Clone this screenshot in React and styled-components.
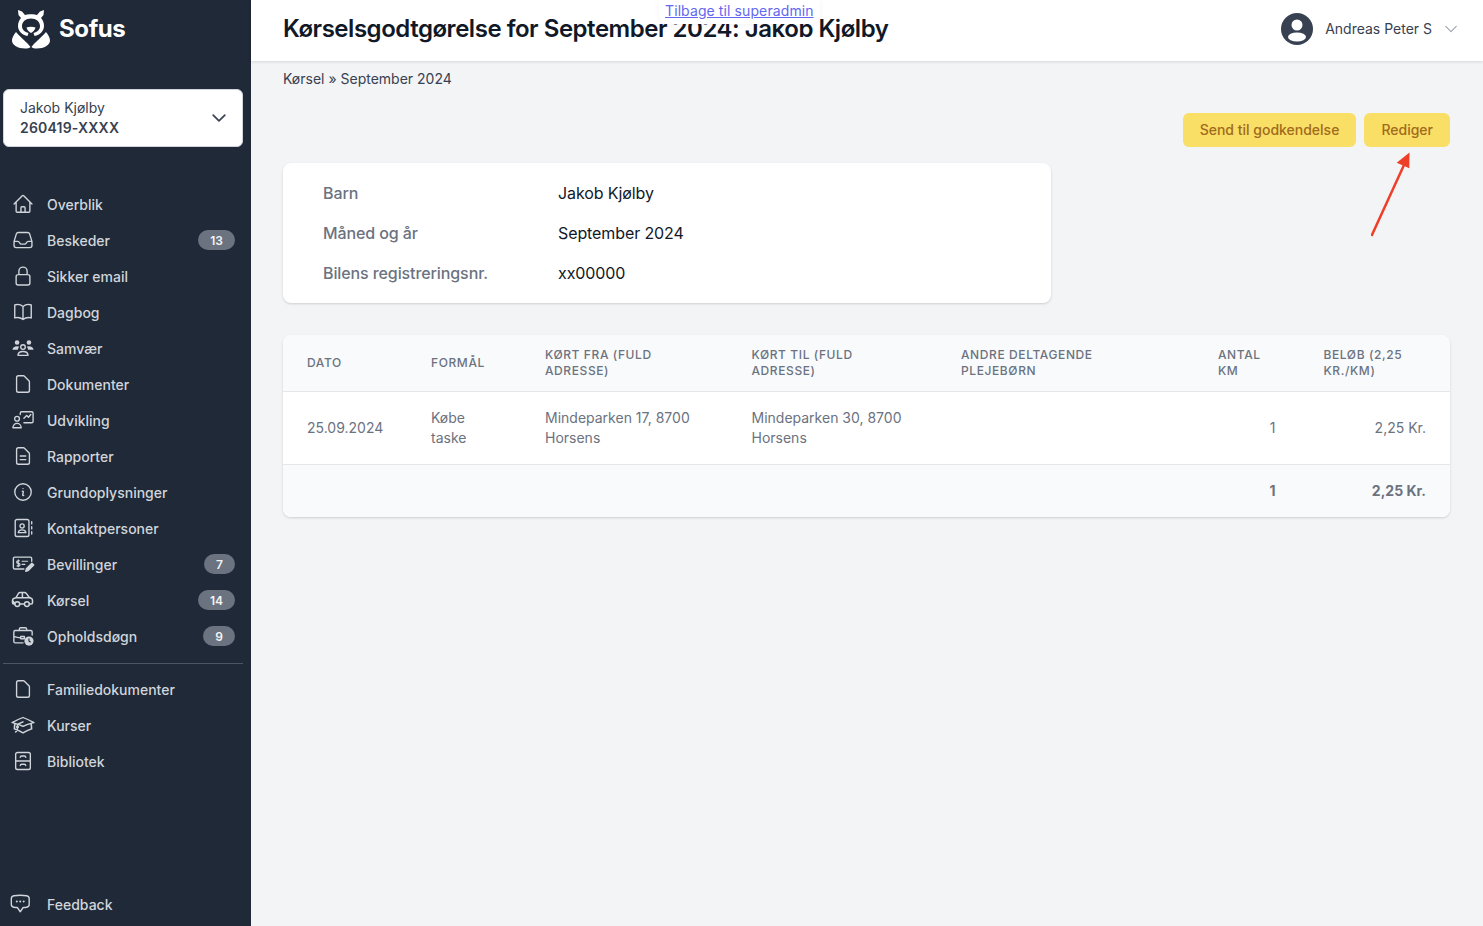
import React from "react";
import styled, { createGlobalStyle } from "styled-components";

const GlobalStyle = createGlobalStyle`
  * { box-sizing: border-box; }
  html, body { margin: 0; height: 100%; overflow: hidden; }
  body {
    font-family: Inter, "Noto Sans", sans-serif;
    background: #f3f4f6;
    color: #111827;
  }
`;

const icons = {
  home: "m2.25 12 8.954-8.955c.44-.439 1.152-.439 1.591 0L21.75 12M4.5 9.75v10.125c0 .621.504 1.125 1.125 1.125H9.75v-4.875c0-.621.504-1.125 1.125-1.125h2.25c.621 0 1.125.504 1.125 1.125V21h4.125c.621 0 1.125-.504 1.125-1.125V9.75M8.25 21h8.25",
  inbox: "M2.25 13.5h3.86a2.25 2.25 0 0 1 2.012 1.244l.256.512a2.25 2.25 0 0 0 2.013 1.244h3.218a2.25 2.25 0 0 0 2.013-1.244l.256-.512a2.25 2.25 0 0 1 2.013-1.244h3.859m-19.5.338V18a2.25 2.25 0 0 0 2.25 2.25h15A2.25 2.25 0 0 0 21.75 18v-4.162c0-.224-.034-.447-.1-.661L19.24 5.338a2.25 2.25 0 0 0-2.15-1.588H6.911a2.25 2.25 0 0 0-2.15 1.588L2.35 13.177a2.25 2.25 0 0 0-.1.661Z",
  lock: "M16.5 10.5V6.75a4.5 4.5 0 1 0-9 0v3.75m-.75 11.25h10.5a2.25 2.25 0 0 0 2.25-2.25v-6.75a2.25 2.25 0 0 0-2.25-2.25H6.75a2.25 2.25 0 0 0-2.25 2.25v6.75a2.25 2.25 0 0 0 2.25 2.25Z",
  book: "M12 6.042A8.967 8.967 0 0 0 6 3.75c-1.052 0-2.062.18-3 .512v14.25A8.987 8.987 0 0 1 6 18c2.305 0 4.408.867 6 2.292m0-14.25a8.966 8.966 0 0 1 6-2.292c1.052 0 2.062.18 3 .512v14.25A8.987 8.987 0 0 0 18 18a8.967 8.967 0 0 0-6 2.292m0-14.25v14.25",
  doc: "M7 21h10a2 2 0 0 0 2-2V9.414a1 1 0 0 0-.293-.707l-5.414-5.414A1 1 0 0 0 12.586 3H7a2 2 0 0 0-2 2v14a2 2 0 0 0 2 2z",
  report: "M9 12h6m-6 4h6m2 5H7a2 2 0 0 1-2-2V5a2 2 0 0 1 2-2h5.586a1 1 0 0 1 .707.293l5.414 5.414a1 1 0 0 1 .293.707V19a2 2 0 0 1-2 2z",
  info: "m11.25 11.25.041-.02a.75.75 0 0 1 1.063.852l-.708 2.836a.75.75 0 0 0 1.063.853l.041-.021M21 12a9 9 0 1 1-18 0 9 9 0 0 1 18 0Zm-9-3.75h.008v.008H12V8.25Z",
  cap: "M4.26 10.147a60.438 60.438 0 0 0-.491 6.347A48.62 48.62 0 0 1 12 20.904a48.62 48.62 0 0 1 8.232-4.41 60.46 60.46 0 0 0-.491-6.347m-15.482 0a50.636 50.636 0 0 0-2.658-.813A59.906 59.906 0 0 1 12 3.493a59.903 59.903 0 0 1 10.399 5.84c-.896.248-1.783.52-2.658.814m-15.482 0A50.717 50.717 0 0 1 12 13.489a50.702 50.702 0 0 1 7.74-3.342M6.75 15a.75.75 0 1 0 0-1.5.75.75 0 0 0 0 1.5Zm0 0v-3.675A55.378 55.378 0 0 1 12 8.443m-7.007 11.55A5.981 5.981 0 0 0 6.75 15.75v-1.5",
  chat: "M8.625 9.75a.375.375 0 1 1-.75 0 .375.375 0 0 1 .75 0Zm0 0H8.25m4.125 0a.375.375 0 1 1-.75 0 .375.375 0 0 1 .75 0Zm0 0H12m4.125 0a.375.375 0 1 1-.75 0 .375.375 0 0 1 .75 0Zm0 0h-.375m-13.5 3.01c0 1.6 1.123 2.994 2.707 3.227 1.129.166 2.27.293 3.423.379.35.026.67.21.865.501L12 21l2.755-4.133a1.14 1.14 0 0 1 .865-.501 48.172 48.172 0 0 0 3.423-.379c1.584-.233 2.707-1.626 2.707-3.228V6.741c0-1.602-1.123-2.995-2.707-3.228A48.394 48.394 0 0 0 12 3c-2.392 0-4.744.175-7.043.513C3.373 3.746 2.25 5.14 2.25 6.741v6.018Z",
  contact: "M5.5 2.75h11a2 2 0 0 1 2 2v14.5a2 2 0 0 1-2 2h-11a2 2 0 0 1-2-2V4.75a2 2 0 0 1 2-2ZM21.5 5v2.5M21.5 10.5v2.5M21.5 16v2.5M11 7.5a2.3 2.3 0 1 0 0 4.6 2.3 2.3 0 0 0 0-4.6ZM6.8 17c.3-2 2-3 4.2-3s3.9 1 4.2 3Z",
  cabinet: "M6 2.75h12a2 2 0 0 1 2 2v14.5a2 2 0 0 1-2 2H6a2 2 0 0 1-2-2V4.75a2 2 0 0 1 2-2ZM4 12h16M9 8c0-1 .6-1.5 1.5-1.5h3c.9 0 1.5.5 1.5 1.5M9 17c0-1 .6-1.5 1.5-1.5h3c.9 0 1.5.5 1.5 1.5",
  car: "M2.5 13.5c0-1.2.7-2 1.8-2.3L6 10.7l2.4-4.2c.4-.6 1-1 1.8-1h4.2c.8 0 1.4.3 1.9.9l3.2 4.3 1.6.6c.9.3 1.4 1 1.4 2v2.4c0 .7-.5 1.2-1.2 1.2h-1.5M5 16.9H3.7c-.7 0-1.2-.5-1.2-1.2v-2.2ZM9.5 16.9h5M6 10.7h14.5M12.4 5.6v5.1M7.3 19.5a2.4 2.4 0 1 0 0-4.8 2.4 2.4 0 0 0 0 4.8ZM16.9 19.5a2.4 2.4 0 1 0 0-4.8 2.4 2.4 0 0 0 0 4.8Z",
  chart: "M9 6V4.5A1.5 1.5 0 0 1 10.5 3h11A1.5 1.5 0 0 1 23 4.5v9a1.5 1.5 0 0 1-1.5 1.5H13M13 10l3-3 2 2 2.5-3M5.5 8a2.6 2.6 0 1 0 0 5.2 2.6 2.6 0 0 0 0-5.2ZM1 20.5c0-2.8 2-4.8 4.5-4.8s4.5 2 4.5 4.8Z",
};

// some icons sit off-centre or wider than the usual 22px box in the picture
const viewBoxes = {
  car: "2 2 22 22",
  cap: "1.5 -0.5 21 25",
  chat: "3 0.5 24 24",
};

const Svg = ({ children, size = 22, box = "0 0 24 24", stretch }) => (
  <svg
    width={size}
    height={size}
    viewBox={box}
    preserveAspectRatio={stretch ? "none" : undefined}
    fill="none"
    stroke="currentColor"
    strokeWidth="1.5"
    strokeLinecap="round"
    strokeLinejoin="round"
  >
    {children}
  </svg>
);

const PeopleIcon = () => (
  <Svg>
    <g fill="currentColor" stroke="none">
      <circle cx="5.5" cy="6" r="2.5" />
      <circle cx="18.5" cy="6" r="2.5" />
      <path d="M.5 14c0-2.5 2.2-4 5-4 1 0 1.9.2 2.7.6-1 .8-1.7 2-1.8 3.4Z" />
      <path d="M23.5 14c0-2.5-2.2-4-5-4-1 0-1.9.2-2.7.6 1 .8 1.7 2 1.8 3.4Z" />
    </g>
    <circle cx="12" cy="11" r="2.5" />
    <path d="M6.5 20c.2-2.8 2.6-4.2 5.5-4.2s5.3 1.4 5.5 4.2Z" />
  </Svg>
);

const BillIcon = () => (
  <Svg>
    <path d="M13 17.5H3A1.5 1.5 0 0 1 1.5 16V6A1.5 1.5 0 0 1 3 4.5h17A1.5 1.5 0 0 1 21.5 6v3" />
    <path d="M8 8.5H6.5a1.3 1.3 0 0 0 0 2.8h.8a1.3 1.3 0 0 1 0 2.8H5.5M6.8 7.5V15M11 9h6M11 12.5h3" strokeWidth="1.3" />
    <path d="m15 20 .7-2.8 6-6 2 2-6 6Z" fill="currentColor" />
  </Svg>
);

const CaseIcon = () => (
  <Svg>
    <path d="M8 6V4.5A1.5 1.5 0 0 1 9.5 3h5A1.5 1.5 0 0 1 16 4.5V6M12 19.5H3.5A1.5 1.5 0 0 1 2 18V7.5A1.5 1.5 0 0 1 3.5 6h17A1.5 1.5 0 0 1 22 7.5V11M2 12.5c2.5.9 5 1.4 7.5 1.5M9.5 12.5h4V15h-4z" />
    <circle cx="18.5" cy="17.5" r="5" fill="currentColor" stroke="none" />
    <path d="M18.5 15v2.5l1.5 1" stroke="#1f2937" strokeWidth="1.2" />
  </Svg>
);

const NavGlyph = ({ name }) => {
  if (name === "people") return <PeopleIcon />;
  if (name === "bill") return <BillIcon />;
  if (name === "case") return <CaseIcon />;
  return <Svg box={viewBoxes[name]} stretch={name === "cap"}><path d={icons[name]} /></Svg>;
};

const Logo = () => (
  <svg width="38" height="40" viewBox="0 0 38 40" fill="#fff">
    <path d="M6 1 10 2.5 13 6C15 5 23 5 25 6L28 2.5 32 1 31.5 6 29 9C31 11 32 14 32 17 32 22 28 26 22.5 27L21.5 24C25.5 23 28 20.5 28 17 28 12.5 24 9.5 19 9.5 14 9.5 10 12.5 10 17 10 20.5 12.5 23 16.5 24L15.5 27C10 26 6 22 6 17 6 14 7 11 9 9L6.5 6Z" />
    <path d="M14.5 18.5C17 17.5 21 17.5 23.5 18.5 23 21 21 23 19 24 17 23 15 21 14.5 18.5Z" />
    <path d="M4 23C1.5 26 0 29 0 31.5 0 36 6 39.5 13 39.5 15.5 39.5 17.5 39 18.5 38 15 33 10 30 4 23Z" />
    <path d="M34 23C36.5 26 38 29 38 31.5 38 36 32 39.5 25 39.5 22.5 39.5 20.5 39 19.5 38 23 33 28 30 34 23Z" />
  </svg>
);

const Chevron = ({ size = 20, width = 2 }) => (
  <svg width={size} height={size} viewBox="0 0 24 24" fill="none" stroke="currentColor" strokeWidth={width} strokeLinecap="round" strokeLinejoin="round">
    <path d="m5 8.5 7 7 7-7" />
  </svg>
);

const mainNav = [
  { label: "Overblik", icon: "home" },
  { label: "Beskeder", icon: "inbox", badge: 13 },
  { label: "Sikker email", icon: "lock" },
  { label: "Dagbog", icon: "book" },
  { label: "Samvær", icon: "people" },
  { label: "Dokumenter", icon: "doc" },
  { label: "Udvikling", icon: "chart" },
  { label: "Rapporter", icon: "report" },
  { label: "Grundoplysninger", icon: "info" },
  { label: "Kontaktpersoner", icon: "contact" },
  { label: "Bevillinger", icon: "bill", badge: 7 },
  { label: "Kørsel", icon: "car", badge: 14 },
  { label: "Opholdsdøgn", icon: "case", badge: 9 },
];

const familyNav = [
  { label: "Familiedokumenter", icon: "doc" },
  { label: "Kurser", icon: "cap" },
  { label: "Bibliotek", icon: "cabinet" },
];

const columns = [124, 114, 206.5, 209.5, 257, 105.5, 150.5];

const Shell = styled.div`
  display: flex;
  height: 100vh;
`;

const Sidebar = styled.aside`
  width: 251px;
  flex-shrink: 0;
  background: #1f2937;
  display: flex;
  flex-direction: column;
  padding: 0 16px 4px 3px;
`;

const Brand = styled.div`
  display: flex;
  align-items: center;
  gap: 9px;
  height: 58px;
  padding-left: 9px;
  color: #fff;
  font-size: 24px;
  font-weight: 700;
  letter-spacing: -0.4px;
  span { padding-bottom: 2px; }
`;

const ChildSelect = styled.div`
  margin-top: 31px;
  width: 240px;
  height: 58px;
  background: #fff;
  border: 1px solid #d1d5db;
  border-radius: 6px;
  padding: 0 13px 0 16px;
  display: flex;
  align-items: center;
  justify-content: space-between;
  color: #374151;
  font-size: 14px;
  line-height: 20px;
  strong { display: block; font-weight: 600; letter-spacing: 0.2px; }
`;

const Nav = styled.nav`
  margin-top: 39px;
  display: flex;
  flex-direction: column;
`;

const NavItem = styled.div`
  height: 36px;
  display: flex;
  align-items: center;
  color: #d1d5db;
  font-size: 14px;
  font-weight: 500;
`;

const NavIcon = styled.span`
  width: 44px;
  padding-left: 9px;
  display: flex;
  color: #d1d5db;
  svg { overflow: visible; }
`;

const Badge = styled.span`
  margin-left: auto;
  height: 20px;
  padding: 0 12px;
  border-radius: 10px;
  background: #6b7280;
  color: #f3f4f6;
  font-size: 12px;
  font-weight: 600;
  display: flex;
  align-items: center;
  justify-content: center;
`;

const Divider = styled.hr`
  width: 240px;
  margin: 9px 0 7px;
  border: 0;
  border-top: 1px solid #4b5563;
`;

const Footer = styled.div`
  margin-top: auto;
`;

const Main = styled.main`
  flex: 1;
  min-width: 0;
  position: relative;
`;

const TopBar = styled.header`
  height: 61px;
  background: #fff;
  box-shadow: 0 1px 3px rgba(0, 0, 0, 0.12);
  padding: 0 23px 3px 32px;
  display: flex;
  align-items: center;
  justify-content: space-between;
`;

const Title = styled.h1`
  margin: 0;
  font-size: 24px;
  line-height: 32px;
  font-weight: 600;
  letter-spacing: -0.47px;
  color: #111827;
`;

const BackLink = styled.a`
  position: absolute;
  top: 0;
  left: 408px;
  height: 24px;
  padding: 2px 6px 0;
  background: #fff;
  border-radius: 0 0 10px 10px;
  box-shadow: 0 1px 6px rgba(0, 0, 0, 0.05);
  color: #6366f1;
  font-size: 14px;
  line-height: 17px;
  letter-spacing: 0.1px;
  text-decoration: underline;
`;

const User = styled.div`
  display: flex;
  align-items: center;
  color: #374151;
  font-size: 14px;
  svg:last-child { color: #9ca3af; margin-left: 10px; }
`;

const UserName = styled.span`
  padding-bottom: 2px;
`;

const Avatar = styled.span`
  display: flex;
  margin-right: 12px;
`;

const Content = styled.div`
  padding: 8px 33px 0 32px;
`;

const Crumbs = styled.div`
  font-size: 14px;
  line-height: 20px;
  color: #374151;
`;

const Actions = styled.div`
  margin-top: 24px;
  display: flex;
  justify-content: flex-end;
  gap: 8px;
  position: relative;
`;

const YellowButton = styled.button`
  height: 34px;
  padding: 0 17px 2px;
  border: 0;
  border-radius: 6px;
  background: #f9df66;
  color: #a16a1c;
  font-family: inherit;
  font-size: 14px;
  font-weight: 500;
`;

const Arrow = styled.svg`
  position: absolute;
  top: 34px;
  right: 35px;
`;

const InfoCard = styled.section`
  margin-top: 16px;
  width: 768px;
  padding: 10px 40px;
  background: #fff;
  border-radius: 8px;
  box-shadow: 0 1px 3px rgba(0, 0, 0, 0.1), 0 1px 2px rgba(0, 0, 0, 0.06);
`;

const InfoRow = styled.div`
  height: 40px;
  display: grid;
  grid-template-columns: 235px 1fr;
  align-items: center;
  font-size: 16px;
  letter-spacing: -0.1px;
`;

const InfoLabel = styled.span`
  color: #6b7280;
  font-weight: 500;
`;

const InfoValue = styled.span`
  color: #111827;
`;

const TableCard = styled.section`
  margin-top: 32px;
  background: #fff;
  border-radius: 8px;
  overflow: hidden;
  box-shadow: 0 1px 3px rgba(0, 0, 0, 0.1), 0 1px 2px rgba(0, 0, 0, 0.06);
`;

const Table = styled.table`
  width: 100%;
  table-layout: fixed;
  border-collapse: collapse;
`;

const Head = styled.th`
  height: 56px;
  padding: 0 24px;
  background: #f9fafb;
  border-bottom: 1px solid #e5e7eb;
  text-align: left;
  color: #6b7280;
  font-size: 12px;
  line-height: 16px;
  font-weight: 500;
  letter-spacing: 0.6px;
  text-transform: uppercase;
`;

const Cell = styled.td`
  height: 73px;
  padding: 0 24px;
  border-bottom: 1px solid #e5e7eb;
  color: #6b7280;
  font-size: 14px;
  line-height: 20px;
  text-align: ${(p) => (p.$right ? "right" : "left")};
`;

const TotalCell = styled.td`
  height: 53px;
  padding: 0 24px;
  background: #f9fafb;
  color: #6b7280;
  font-size: 14px;
  font-weight: 700;
  text-align: right;
`;

const SideLink = ({ item }) => (
  <NavItem>
    <NavIcon><NavGlyph name={item.icon} /></NavIcon>
    {item.label}
    {item.badge && <Badge>{item.badge}</Badge>}
  </NavItem>
);

export default function App() {
  return (
    <Shell>
      <GlobalStyle />
      <Sidebar>
        <Brand>
          <Logo />
          <span>Sofus</span>
        </Brand>
        <ChildSelect>
          <div>
            Jakob Kjølby
            <strong>260419-XXXX</strong>
          </div>
          <Chevron />
        </ChildSelect>
        <Nav>
          {mainNav.map((item) => (
            <SideLink key={item.label} item={item} />
          ))}
          <Divider />
          {familyNav.map((item) => (
            <SideLink key={item.label} item={item} />
          ))}
        </Nav>
        <Footer>
          <SideLink item={{ label: "Feedback", icon: "chat" }} />
        </Footer>
      </Sidebar>
      <Main>
        <TopBar>
          <Title>Kørselsgodtgørelse for September 2024: Jakob Kjølby</Title>
          <User>
            <Avatar>
              <svg width="32" height="32" viewBox="0 0 32 32">
                <circle cx="16" cy="16" r="16" fill="#374151" />
                <circle cx="16" cy="12" r="5.5" fill="#fff" />
                <ellipse cx="16" cy="24" rx="9" ry="4.5" fill="#fff" />
              </svg>
            </Avatar>
            <UserName>Andreas Peter S</UserName>
            <Chevron size={18} width={1.5} />
          </User>
        </TopBar>
        <BackLink href="#">Tilbage til superadmin</BackLink>
        <Content>
          <Crumbs>Kørsel » September 2024</Crumbs>
          <Actions>
            <YellowButton>Send til godkendelse</YellowButton>
            <YellowButton>Rediger</YellowButton>
            <Arrow width="44" height="92" viewBox="0 0 44 92" fill="none">
              <path d="M.5 89 33 18" stroke="#ee3f28" strokeWidth="2.5" />
              <path d="M38.5 5.5 38.3 21.3 25.7 15.7Z" fill="#ee3f28" />
            </Arrow>
          </Actions>
          <InfoCard>
            <InfoRow><InfoLabel>Barn</InfoLabel><InfoValue>Jakob Kjølby</InfoValue></InfoRow>
            <InfoRow><InfoLabel>Måned og år</InfoLabel><InfoValue>September 2024</InfoValue></InfoRow>
            <InfoRow><InfoLabel>Bilens registreringsnr.</InfoLabel><InfoValue>xx00000</InfoValue></InfoRow>
          </InfoCard>
          <TableCard>
            <Table>
              <colgroup>
                {columns.map((w, i) => <col key={i} style={{ width: w }} />)}
              </colgroup>
              <thead>
                <tr>
                  <Head>Dato</Head>
                  <Head>Formål</Head>
                  <Head>Kørt fra (fuld adresse)</Head>
                  <Head>Kørt til (fuld adresse)</Head>
                  <Head>Andre deltagende plejebørn</Head>
                  <Head>Antal km</Head>
                  <Head>Beløb (2,25 kr./km)</Head>
                </tr>
              </thead>
              <tbody>
                <tr>
                  <Cell>25.09.2024</Cell>
                  <Cell>Købe taske</Cell>
                  <Cell>Mindeparken 17, 8700 Horsens</Cell>
                  <Cell>Mindeparken 30, 8700 Horsens</Cell>
                  <Cell />
                  <Cell $right>1</Cell>
                  <Cell $right>2,25 Kr.</Cell>
                </tr>
                <tr>
                  <TotalCell colSpan={5} />
                  <TotalCell>1</TotalCell>
                  <TotalCell>2,25 Kr.</TotalCell>
                </tr>
              </tbody>
            </Table>
          </TableCard>
        </Content>
      </Main>
    </Shell>
  );
}
